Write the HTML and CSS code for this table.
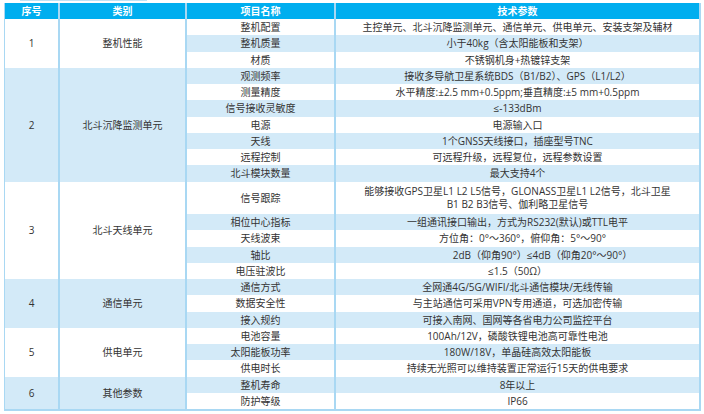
FILE: index.html
```html
<!DOCTYPE html>
<html lang="zh-CN">
<head>
<meta charset="utf-8">
<link rel="stylesheet" href="styles.css">
</head>
<body>
<div class="topline"></div>
<div class="table">
  <div class="th">序号</div>
  <div class="th">类别</div>
  <div class="th">项目名称</div>
  <div class="th">技术参数</div>

  <div class="g g3">1</div>
  <div class="g g3">整机性能</div>
  <div class="c">整机配置</div><div class="c">主控单元、北斗沉降监测单元、通信单元、供电单元、安装支架及辅材</div>
  <div class="c b">整机质量</div><div class="c b">小于40kg（含太阳能板和支架）</div>
  <div class="c">材质</div><div class="c">不锈钢机身+热镀锌支架</div>

  <div class="g g7 b">2</div>
  <div class="g g7 b">北斗沉降监测单元</div>
  <div class="c b">观测频率</div><div class="c b">接收多导航卫星系统BDS（B1/B2）、GPS（L1/L2）</div>
  <div class="c">测量精度</div><div class="c">水平精度:±2.5 mm+0.5ppm;垂直精度:±5 mm+0.5ppm</div>
  <div class="c b">信号接收灵敏度</div><div class="c b">≤-133dBm</div>
  <div class="c">电源</div><div class="c">电源输入口</div>
  <div class="c b">天线</div><div class="c b">1个GNSS天线接口，插座型号TNC</div>
  <div class="c">远程控制</div><div class="c">可远程升级，远程复位，远程参数设置</div>
  <div class="c b">北斗模块数量</div><div class="c b">最大支持4个</div>

  <div class="g g6">3</div>
  <div class="g g6">北斗天线单元</div>
  <div class="c r2">信号跟踪</div><div class="c r2 two">能够接收GPS卫星L1 L2 L5信号，GLONASS卫星L1 L2信号，北斗卫星<br>B1 B2 B3信号、伽利略卫星信号</div>
  <div class="c b">相位中心指标</div><div class="c b">一组通讯接口输出，方式为RS232(默认)或TTL电平</div>
  <div class="c">天线波束</div><div class="c nudge">方位角：0°～360°，俯仰角：5°～90°</div>
  <div class="c b">轴比</div><div class="c b shift">2dB（仰角90°）≤4dB（仰角20°～90°）</div>
  <div class="c">电压驻波比</div><div class="c">≤1.5（50Ω）</div>

  <div class="g g3 b">4</div>
  <div class="g g3 b">通信单元</div>
  <div class="c b">通信方式</div><div class="c b">全网通4G/5G/WIFI/北斗通信模块/无线传输</div>
  <div class="c">数据安全性</div><div class="c">与主站通信可采用VPN专用通道，可选加密传输</div>
  <div class="c b">接入规约</div><div class="c b">可接入南网、国网等各省电力公司监控平台</div>

  <div class="g g3">5</div>
  <div class="g g3">供电单元</div>
  <div class="c">电池容量</div><div class="c">100Ah/12V，磷酸铁锂电池高可靠性电池</div>
  <div class="c b">太阳能板功率</div><div class="c b">180W/18V，单晶硅高效太阳能板</div>
  <div class="c">供电时长</div><div class="c">持续无光照可以维持装置正常运行15天的供电要求</div>

  <div class="g g2 b">6</div>
  <div class="g g2 b">其他参数</div>
  <div class="c b">整机寿命</div><div class="c b">8年以上</div>
  <div class="c">防护等级</div><div class="c">IP66</div>
</div>
</body>
</html>
```
FILE: styles.css
```css
html, body {
  margin: 0;
  padding: 0;
  background: #ffffff;
}
body {
  font-family: "Open Sans", "Noto Sans CJK SC", sans-serif;
  font-size: 10px;
  color: #333333;
}
.topline {
  margin-left: 20px;
  width: 127px;
  height: 1px;
  background: #bfe2f6;
  margin-bottom: 2px;
}
.table {
  margin-left: 4px;
  width: 697px;
  box-sizing: border-box;
  display: grid;
  grid-template-columns: 53px 125px 147px 363px;
  grid-template-rows: 16px repeat(24, 16.25px);
  column-gap: 2px;
  padding: 0 2px 2px 1px;
  background: #a9d8f3;
}
.th, .c, .g {
  display: flex;
  align-items: center;
  justify-content: center;
  text-align: center;
  line-height: 12px;
  white-space: nowrap;
  background: #ffffff;
  overflow: hidden;
}
.th {
  background: #00aeef;
  color: #ffffff;
  font-weight: bold;
}
.b { background: #d3eaf8; }
.g3 { grid-row: span 3; }
.g7 { grid-row: span 7; }
.g6 { grid-row: span 6; }
.g2 { grid-row: span 2; }
.r2 { grid-row: span 2; }
.two { line-height: 13px; }
.shift { padding-left: 50px; }
.nudge { padding-left: 10px; }
```
